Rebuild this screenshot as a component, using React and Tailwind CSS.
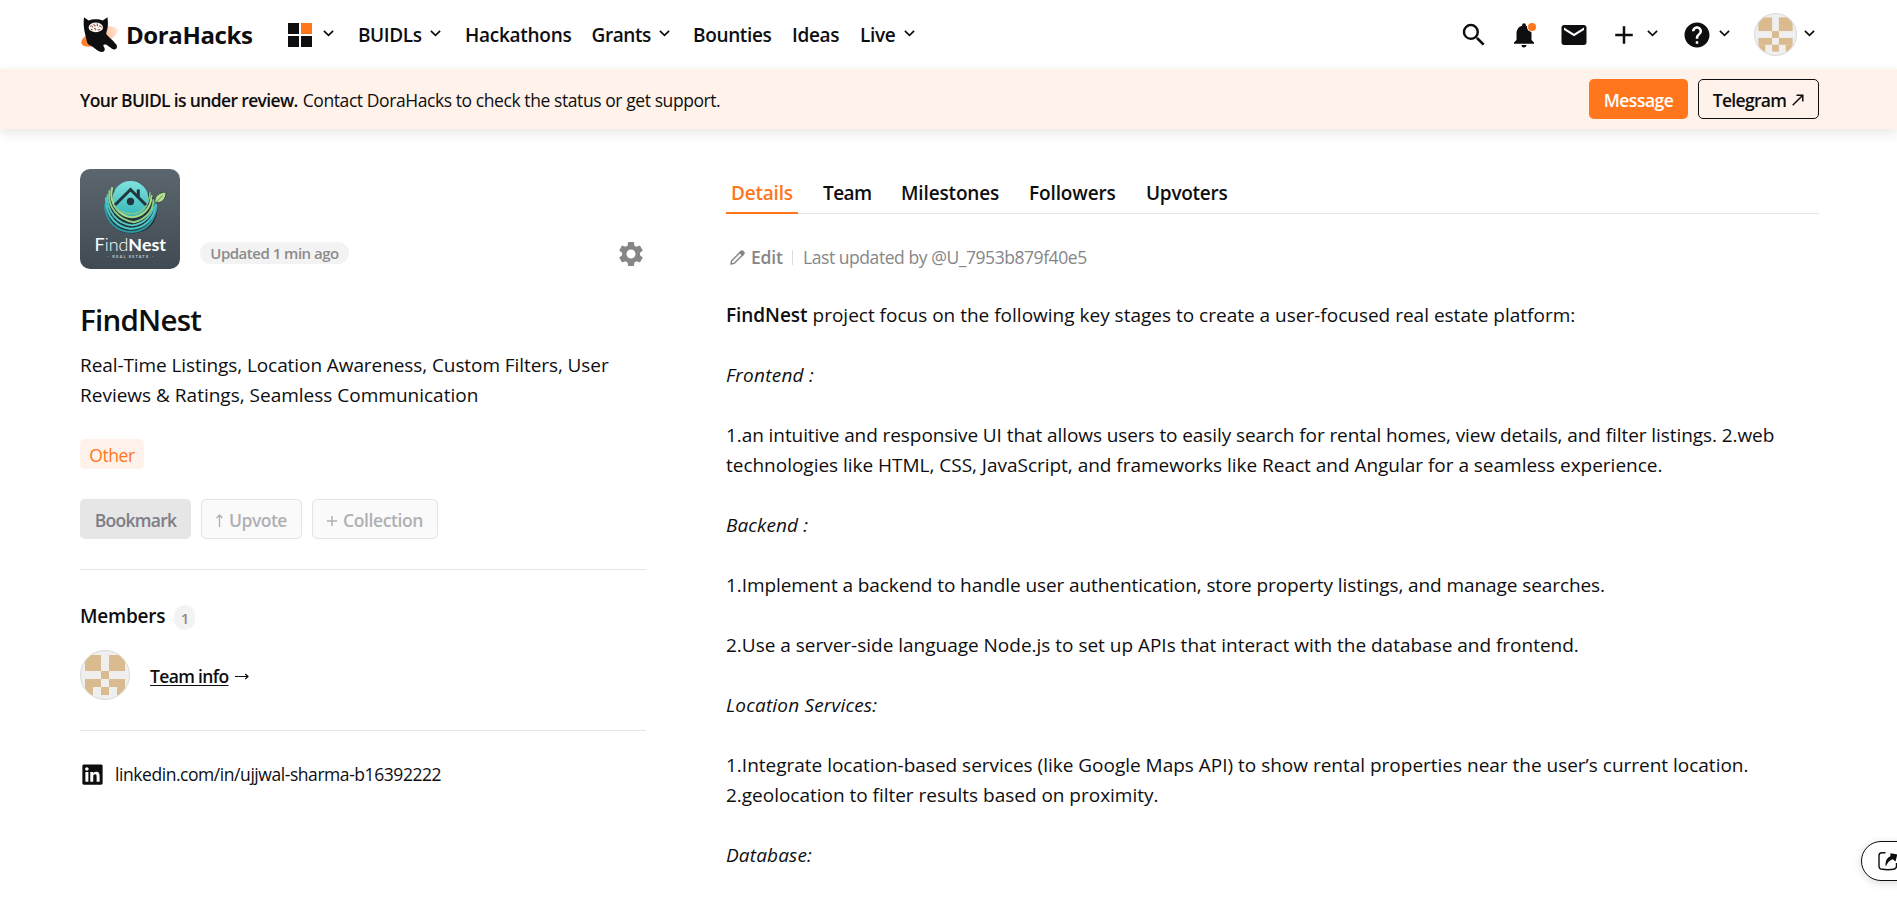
import React from 'react';
import { MdSearch, MdNotifications, MdEmail, MdAdd, MdHelp, MdSettings } from 'react-icons/md';
import { RiLinkedinBoxFill } from 'react-icons/ri';

function Chevron({ className = '' }) {
  return (
    <svg className={`h-[7px] w-[11px] shrink-0 ${className}`} viewBox="0 0 11 7" fill="none" stroke="#0e0e10" strokeWidth="1.7">
      <path d="M0.9 0.9 5.5 5.3 10.1 0.9" />
    </svg>
  );
}

function DoraCat() {
  return (
    <svg className="h-9 w-[37px] shrink-0" viewBox="0 0 37 36">
      <defs>
        <linearGradient id="ring" x1="0" x2="1" y1="0" y2="0">
          <stop offset="0" stopColor="#ff7a22" />
          <stop offset="0.25" stopColor="#ff8c42" />
          <stop offset="1" stopColor="#ffeadd" />
        </linearGradient>
      </defs>
      <ellipse cx="18.5" cy="19.5" rx="19.3" ry="7.8" transform="rotate(-22 18.5 19.5)" fill="url(#ring)" />
      <path
        d="M3 .2 7.6 3.4C11.5 1.7 18 1.7 21.8 3.4L26.4.2C27.2 5 27.2 9.500 26 13.200 25.400 15 25 16 25.400 17.300 27.500 20 32.500 23.800 35.300 27.600 37.500 31 34 33.800 31 31.800L25.500 27.800C23.600 26.900 22 27.600 22.400 29 24.800 32.300 23.800 34.900 20.800 34.900 16.500 34.800 12.500 29.500 9 28.200 5.800 27 5.600 23.500 4.900 20 4 16.500 3.200 13.500 2.900 10 2.600 6.500 2.600 3 3 .2Z"
        fill="#0e0e10"
      />
      <ellipse cx="14.800" cy="10.400" rx="7.200" ry="4.900" fill="#fff6f0" />
      <g stroke="#6b3a28" strokeWidth="1" fill="none">
        <path d="M9.300 9.500c1.200-1.400 2.400-.6 2.400.8M13.200 6.800c-.8 1.400.2 2.400 1.400 2M16.300 6.500v2.600M17.800 10c1.200-1.600 2.400-1 2.800.4M13 11.500c1.400-.6 2 .6 1.400 1.800M10 12.200l1.600.6M16.600 12.400c.8 1 2 .6 2.600-.4" />
      </g>
    </svg>
  );
}

function Identicon({ className }) {
  const cells = [
    [0, 0, 2, 2], [3, 0, 2, 2], [2, 2, 1, 1], [0, 3, 2, 1], [3, 3, 2, 1], [0, 4, 1, 1], [2, 4, 1, 1], [4, 4, 1, 1],
  ];
  return (
    <div className={`shrink-0 overflow-hidden rounded-full border border-[#d9d9d9] bg-[#efefef] ${className}`}>
      <svg className="h-full w-full" viewBox="0 0 6 6">
        {cells.map(([x, y, w, h]) => (
          <rect key={`${x}-${y}`} x={x + 0.5} y={y + 0.5} width={w} height={h} fill="#d9bb8f" />
        ))}
      </svg>
    </div>
  );
}

function ProjectLogo() {
  return (
    <svg className="h-[100px] w-[100px] shrink-0 rounded-[10px]" viewBox="0 0 100 100">
      <defs>
        <linearGradient id="slate" x1="0" x2="0" y1="0" y2="1">
          <stop offset="0" stopColor="#5b666e" />
          <stop offset="1" stopColor="#3f4a52" />
        </linearGradient>
        <linearGradient id="sky" x1="0" x2="0" y1="0" y2="1">
          <stop offset="0" stopColor="#7fe3df" />
          <stop offset="1" stopColor="#35b5b8" />
        </linearGradient>
      </defs>
      <rect width="100" height="100" fill="url(#slate)" />
      <path d="M29 24C20 38 27 64 51 64.500 76 64 82 42 74 29 70 20 32 18 29 24Z" fill="#23343c" />
      <circle cx="50.500" cy="30" r="18" fill="url(#sky)" />
      <g fill="none" strokeLinecap="round">
        <path d="M24.800 36C26 54 38 63 51 63 65 62.500 75 53 76.500 38" stroke="#2b9aa3" strokeWidth="2" />
        <path d="M26 29C25.500 48 38 59.300 51 59.800 64 59.500 74.500 50 76 35.500" stroke="#49c5c6" strokeWidth="2.200" />
        <path d="M27.500 26C27 44 38 55 52 56.300 64 55.500 73.500 46 74.500 33" stroke="#56cdc6" strokeWidth="1.800" />
        <path d="M29.500 22C27 38 38 50.500 54 53.300 64 51 73.500 43 73.500 31" stroke="#8ccf86" strokeWidth="2" />
        <path d="M32 19C28.500 36 40 47 52 48.300 62 47.500 71 40 71.500 27" stroke="#a5d98a" strokeWidth="2.100" />
        <path d="M34 37C39 43 46 44.800 52 44.800 61 44.300 69 37 70 24" stroke="#7cc58c" strokeWidth="1.600" />
      </g>
      <path d="M35 36 50.500 20.500 66 36" fill="none" stroke="#22353d" strokeWidth="3" />
      <path d="M56.800 20.500h3v8l-3-3Z" fill="#22353d" />
      <circle cx="50.500" cy="32.500" r="3.700" fill="#22353d" />
      <path d="M75 34C74 27 79 23.500 86 23 86 30 82 34.500 76 33.500L73.500 36.500" fill="#b5e08f" stroke="#31463f" strokeWidth="0.900" />
      <path d="M76 33.500 82.500 26.500" stroke="#4c7a55" strokeWidth="0.800" />
      <text x="14.500" y="82" textLength="71.500" lengthAdjust="spacingAndGlyphs" className="font-['Lato']" fontSize="17.500" fill="#fff">
        <tspan fontWeight="400">F</tspan><tspan fontWeight="300">ind</tspan><tspan fontWeight="700">Nest</tspan>
      </text>
      <text x="27.500" y="89" textLength="45.500" className="font-['Lato']" fontSize="4" fontWeight="700" fill="#c3cdd2">
        - REAL ESTATE -
      </text>
    </svg>
  );
}

function NavItem({ label, text, width, chevron }) {
  return (
    <a className={`flex items-center ${width}`}>
      <span className={text}>{label}</span>
      {chevron && <Chevron className="ml-2 -mt-[2px]" />}
    </a>
  );
}

function Header() {
  return (
    <header className="flex h-[69px] items-center justify-between bg-white pl-[81px] pr-[82px]">
      <div className="flex items-center">
        <a className="flex w-[207px] items-center">
          <DoraCat />
          <span className="ml-2 text-[24px] font-bold leading-[30px] tracking-[-0.4px]">DoraHacks</span>
        </a>
        <div className="flex w-[70px] items-center">
          <div className="grid grid-cols-2 gap-[2px]">
            <i className="size-[11px] bg-[#0e0e10]" />
            <i className="size-[11px] bg-[#ff761c]" />
            <i className="size-[11px] bg-[#0e0e10]" />
            <i className="size-[11px] bg-[#0e0e10]" />
          </div>
          <Chevron className="ml-[11px] -mt-[2px]" />
        </div>
        <nav className="flex text-[19px] font-semibold leading-[30px]">
          <NavItem label="BUIDLs" text="tracking-[-0.4px]" width="w-[107px]" chevron />
          <NavItem label="Hackathons" text="tracking-[-0.27px]" width="w-[126.5px]" />
          <NavItem label="Grants" text="tracking-[-0.4px]" width="w-[101.500px]" chevron />
          <NavItem label="Bounties" text="tracking-[-0.35px]" width="w-[99px]" />
          <NavItem label="Ideas" text="tracking-[-0.35px]" width="w-[68px]" />
          <NavItem label="Live" text="tracking-[-0.3px]" width="w-[60px]" chevron />
        </nav>
      </div>
      <div className="flex items-center">
        <div className="flex items-center gap-5">
          <MdSearch size={30} />
          <div className="relative">
            <MdNotifications size={30} />
            <i className="absolute right-[3px] top-[3px] size-[8px] rounded-full bg-[#ff761c] ring-1 ring-white" />
          </div>
          <MdEmail size={30} />
          <MdAdd size={30} />
        </div>
        <Chevron className="ml-2 -mt-[2px]" />
        <MdHelp size={30} className="ml-6" />
        <Chevron className="ml-[7px] -mt-[2px]" />
        <Identicon className="ml-6 size-[43px]" />
        <Chevron className="ml-[7px] -mt-[2px]" />
      </div>
    </header>
  );
}

function Banner() {
  return (
    <section className="flex h-[60px] items-center justify-between bg-[#fff2ea] pl-20 pr-[78px] text-[17.5px] shadow-[0_4px_12px_rgba(0,0,0,0.1)]">
      <p className="flex gap-[5px] whitespace-nowrap pt-[2px]">
        <b className="font-semibold tracking-[-0.65px]">Your BUIDL is under review.</b>
        <span className="tracking-[-0.42px]">Contact DoraHacks to check the status or get support.</span>
      </p>
      <div className="flex gap-[10px] font-semibold">
        <button className="h-10 w-[99px] rounded-[5px] bg-[#ff761c] pt-[2px] tracking-[-0.5px] text-white">Message</button>
        <button className="flex h-10 w-[121px] items-center justify-center gap-[6px] rounded-[5px] border border-[#0e0e10] pt-[2px] tracking-[-0.7px]">
          Telegram
          <svg className="size-[12px]" viewBox="0 0 12 12" fill="none" stroke="#0e0e10" strokeWidth="1.500">
            <path d="M0.700 11.300 10.500 1.500M4.500 1.200h6.300v6.300" />
          </svg>
        </button>
      </div>
    </section>
  );
}

function Sidebar() {
  return (
    <aside className="w-[566px] shrink-0 pt-10">
      <div className="flex items-end">
        <ProjectLogo />
        <span className="mb-[5px] ml-5 flex h-[22px] w-[149px] items-center justify-center rounded-full bg-[#f3f3f3] pt-px text-[15px] font-semibold tracking-[-0.5px] text-[#8b8b8c]">
          Updated 1 min ago
        </span>
        <MdSettings size={30} className="ml-auto text-[#868688]" />
      </div>
      <h1 className="mt-[31px] text-[29.5px] font-semibold leading-[40px] tracking-[-0.75px]">FindNest</h1>
      <p className="mt-[10px] whitespace-nowrap text-[19px] leading-[30px]">
        <span className="block tracking-[-0.08px]">Real-Time Listings, Location Awareness, Custom Filters, User</span>
        <span className="block">Reviews &amp; Ratings, Seamless Communication</span>
      </p>
      <span className="mt-[29px] flex h-[30px] w-16 items-center justify-center rounded-[5px] bg-[#fff2ea] pt-[2px] text-[17.5px] tracking-[-0.45px] text-[#ff761c]">
        Other
      </span>
      <div className="mt-[30px] flex gap-[10px] text-[17.5px] font-semibold">
        <button className="h-10 w-[111px] rounded-[5px] bg-[#e6e6e6] pt-[2px] tracking-[-0.7px] text-[#7d7d85]">Bookmark</button>
        <button className="flex h-10 w-[101px] items-center justify-center gap-[6px] rounded-[5px] border border-[#e3e3e3] bg-[#fafafa] pt-[2px] tracking-[-0.5px] text-[#b0b0b4]">
          <svg className="h-[13px] w-[7px]" viewBox="0 0 7 13" fill="none" stroke="currentColor" strokeWidth="1.300">
            <path d="M3.500 13V1M0.600 4 3.500 1 6.400 4" />
          </svg>
          Upvote
        </button>
        <button className="flex h-10 w-[126px] items-center justify-center gap-[6px] rounded-[5px] border border-[#e3e3e3] bg-[#fafafa] pt-[2px] tracking-[-0.4px] text-[#b0b0b4]">
          <svg className="mt-[2px] size-[10px]" viewBox="0 0 10 10" fill="none" stroke="currentColor" strokeWidth="1.500">
            <path d="M5 0v10M0 5h10" />
          </svg>
          Collection
        </button>
      </div>
      <hr className="mt-[30px] border-[#e6e6e6]" />
      <h2 className="mt-[31px] flex h-[30px] items-center text-[19px] font-semibold leading-[30px] tracking-[-0.2px]">
        Members
        <span className="ml-[9px] mt-[3px] flex h-[25px] w-[21px] items-center justify-center rounded-full bg-[#f3f3f3] text-[15px] text-[#8b8b8c]">1</span>
      </h2>
      <div className="mt-[19px] flex items-center">
        <Identicon className="size-[50px]" />
        <a className="ml-5 flex items-center gap-[6px] pt-[2px] text-[17.5px] font-semibold">
          <span className="tracking-[-0.65px] underline decoration-1 underline-offset-[2px]">Team info</span>
          <svg className="mt-px h-[7px] w-[14px]" viewBox="0 0 14 7" fill="none" stroke="#0e0e10" strokeWidth="1.200">
            <path d="M0 3.500h13M10.300 1 13 3.500 10.300 6" />
          </svg>
        </a>
      </div>
      <hr className="mt-[30px] border-[#e6e6e6]" />
      <a className="mt-[28px] flex h-[30px] items-center text-[17.5px]">
        <RiLinkedinBoxFill size={27} className="-ml-px" />
        <span className="ml-[9px] tracking-[-0.44px]">linkedin.com/in/ujjwal-sharma-b16392222</span>
      </a>
    </aside>
  );
}

function Details() {
  return (
    <main className="flex-1 whitespace-nowrap pt-[49px]">
      <div className="flex h-9 gap-5 border-b border-[#e6e6e6] text-[19px] font-semibold leading-[30px]">
        <a className="h-9 w-[72px] border-b-2 border-[#ff761c] px-[5px] tracking-[-0.2px] text-[#ff761c]">Details</a>
        <a className="w-[58px] px-[5px] tracking-[-0.6px]">Team</a>
        <a className="w-[108px] px-[5px] tracking-[-0.15px]">Milestones</a>
        <a className="w-[97px] px-[5px] tracking-[-0.12px]">Followers</a>
        <a className="px-[5px] tracking-[-0.28px]">Upvoters</a>
      </div>
      <div className="mt-7 flex h-[30px] items-center text-[17.5px] text-[#868688]">
        <svg className="ml-1 size-[15px]" viewBox="0 0 15 15" fill="none" stroke="currentColor" strokeWidth="1.400" strokeLinejoin="round">
          <path d="M1 14 1.700 10.700 10.800 1.600Q12 0.600 13.200 1.800 14.400 3 13.400 4.200L4.300 13.300Z" />
          <path d="M9.800 2.600 12.400 5.200 13.400 4.200Q14.400 3 13.200 1.800 12 0.600 10.800 1.600Z" fill="currentColor" />
        </svg>
        <span className="ml-[6px] w-[41px] font-semibold tracking-[-0.15px]">Edit</span>
        <i className="h-[15px] w-px bg-[#dedede]" />
        <span className="ml-[10px] tracking-[-0.44px]">Last updated by @U_7953b879f40e5</span>
      </div>
      <div className="mt-[28px] flex flex-col gap-[30px] text-[19px] leading-[30px]">
        <p><b className="mr-[5px] font-semibold tracking-[-0.05px]">FindNest</b>project focus on the following key stages to create a user-focused real estate platform:</p>
        <p className="italic tracking-[0.24px]">Frontend :</p>
        <p>
          <span className="block tracking-[-0.08px]">1.an intuitive and responsive UI that allows users to easily search for rental homes, view details, and filter listings. 2.web</span>
          <span className="block tracking-[-0.02px]">technologies like HTML, CSS, JavaScript, and frameworks like React and Angular for a seamless experience.</span>
        </p>
        <p className="italic tracking-[0.1px]">Backend :</p>
        <p className="tracking-[-0.085px]">1.Implement a backend to handle user authentication, store property listings, and manage searches.</p>
        <p className="tracking-[-0.012px]">2.Use a server-side language Node.js to set up APIs that interact with the database and frontend.</p>
        <p className="italic tracking-[0.18px]">Location Services:</p>
        <p>
          <span className="block tracking-[-0.01px]">1.Integrate location-based services (like Google Maps API) to show rental properties near the user’s current location.</span>
          <span className="block tracking-[-0.02px]">2.geolocation to filter results based on proximity.</span>
        </p>
        <p className="italic tracking-[0.16px]">Database:</p>
      </div>
    </main>
  );
}

function ShareTab() {
  return (
    <button className="absolute -right-6 top-[841px] flex h-10 w-[60px] items-center rounded-full border-[1.5px] border-[#0e0e10] bg-white pl-[16px] shadow-[0_2px_8px_rgba(0,0,0,0.15)]">
      <svg className="h-[20px] w-[22px] shrink-0" viewBox="0 0 22 20" fill="none">
        <path d="M7.500 1.800H4C2 1.800 1 2.800 1 4.800V15C1 17.500 2 18.300 4.500 18.300 9 18.900 12 18.800 15.500 18.300 18 18 18.500 17 18.500 15V12" stroke="#0e0e10" strokeWidth="1.400" />
        <path d="M12.500 2.200 18.500 3.300Q19.500 3.500 19.100 4.500L17.500 10.500 14.800 8.200C11.500 9.300 9.500 11.500 7.800 15.500 6.800 11 8.500 6.500 12.300 5.200Z" fill="#0e0e10" />
      </svg>
    </button>
  );
}

export default function App() {
  return (
    <div className="relative h-[905px] w-full overflow-hidden bg-white font-['Open_Sans','Noto_Sans',sans-serif] text-[#0e0e10]">
      <Header />
      <Banner />
      <div className="flex gap-20 pl-20 pr-[78px]">
        <Sidebar />
        <Details />
      </div>
      <ShareTab />
    </div>
  );
}
